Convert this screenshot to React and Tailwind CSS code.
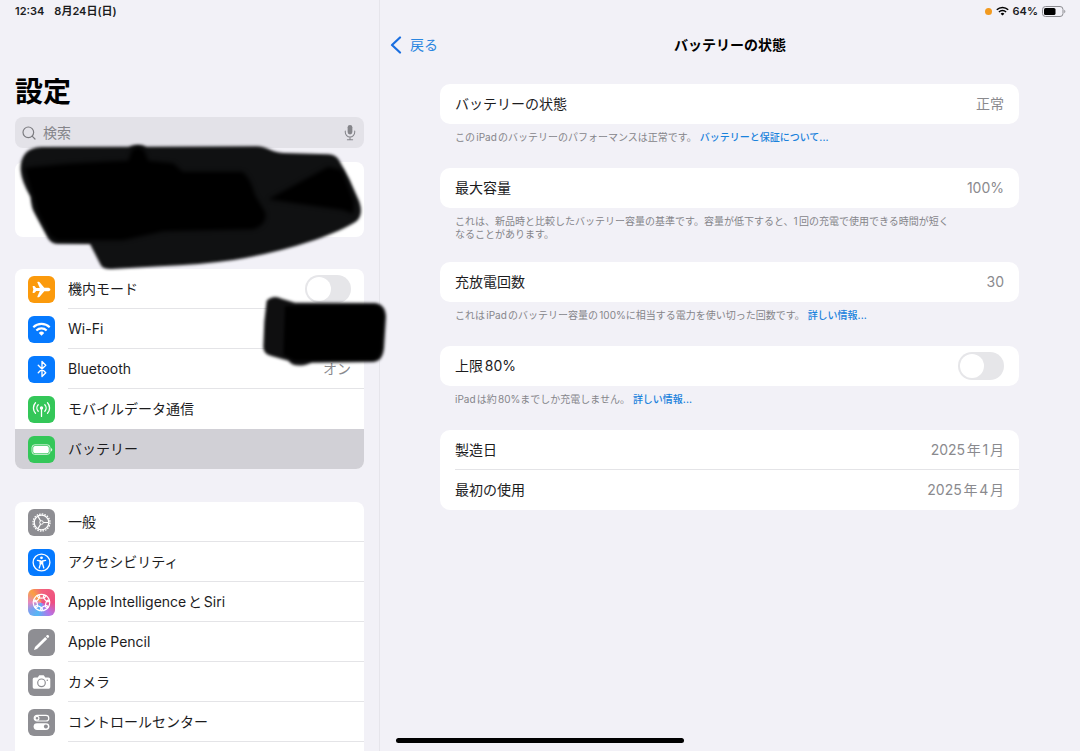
import { useState } from 'react';
import { Bluetooth, Search } from 'lucide-react';
import { IoAirplane } from 'react-icons/io5';

const WifiIcon = ({ className }) => (
  <svg viewBox="0 0 20 15" className={className} fill="none" stroke="currentColor" strokeWidth="2.3">
    <path d="M1.2 5.6a12.6 12.6 0 0 1 17.6 0" />
    <path d="M4.5 9.1a7.8 7.8 0 0 1 11 0" />
    <path d="M10 14.6 7.1 11.7a4.1 4.1 0 0 1 5.8 0Z" fill="currentColor" stroke="none" />
  </svg>
);

const AntennaIcon = () => (
  <svg viewBox="0 0 27 27" className="size-[27px]" fill="none" stroke="#fff" strokeWidth="1.3" strokeLinecap="round">
    <circle cx="13.5" cy="12" r="1.7" fill="#fff" stroke="none" />
    <path d="M13.5 12v8.4" />
    <path d="M10.2 8.8a4.6 4.6 0 0 0 0 6.4M16.8 8.8a4.6 4.6 0 0 1 0 6.4" />
    <path d="M7.5 6.8a7.6 7.6 0 0 0 0 10.4M19.5 6.8a7.6 7.6 0 0 1 0 10.4" />
  </svg>
);

const BatteryIcon = () => (
  <svg viewBox="0 0 27 27" className="size-[27px]" fill="none">
    <rect x="4" y="8.8" width="18" height="9.6" rx="2.8" stroke="#fff" strokeOpacity="0.75" />
    <rect x="5.2" y="10" width="15.6" height="7.2" rx="1.8" fill="#fff" />
    <path d="M23.2 12v3.4c1.4-.5 1.4-2.9 0-3.4Z" fill="#fff" />
  </svg>
);

const GearIcon = () => (
  <svg viewBox="0 0 27 27" className="size-[27px]" fill="none" stroke="#fff">
    <circle cx="13.5" cy="13.5" r="8.5" strokeWidth="1.3" strokeDasharray="1.6 1.07" />
    <circle cx="13.5" cy="13.5" r="7.3" strokeWidth="1.3" />
    <circle cx="13.5" cy="13.5" r="1.8" strokeWidth="1" />
    <path d="M15.3 13.5h5.1M12.6 11.9 10 7.4M12.6 15.1 10 19.6" strokeWidth="1.1" />
  </svg>
);

const AccessibilityIcon = () => (
  <svg viewBox="0 0 27 27" className="size-[27px]" fill="none" stroke="#fff" strokeLinecap="round" strokeLinejoin="round">
    <circle cx="13.5" cy="13.5" r="8.4" strokeWidth="1.3" />
    <circle cx="13.5" cy="8.8" r="1.4" fill="#fff" stroke="none" />
    <path d="M9.4 11.4 12.4 12v3l-1.2 4M17.6 11.4l-3 .6v3l1.2 4" strokeWidth="1.3" />
    <path d="M12.4 12h2.2v3h-2.2z" fill="#fff" strokeWidth="0.8" />
  </svg>
);

const IntelligenceIcon = () => (
  <svg viewBox="0 0 27 27" className="size-[27px]" fill="none" stroke="#fff" strokeWidth="1.2">
    {[0, 51, 103, 154, 206, 257, 309].map((angle) => (
      <ellipse key={angle} cx="13.5" cy="7.2" rx="3.9" ry="1.9" transform={`rotate(${angle} 13.5 13.5)`} />
    ))}
  </svg>
);

const PencilIcon = () => (
  <svg viewBox="0 0 27 27" className="size-[27px]" fill="#fff">
    <path d="m7 18.1 10.2-10.2 2 2L9 20.1l-3 1Z" />
    <path d="m17.9 7.2.9-.9c1.2-1.1 3.1.8 2 2l-.9.9Z" />
  </svg>
);

const CameraIcon = () => (
  <svg viewBox="0 0 27 27" className="size-[27px]">
    <path d="M6.6 8.4h3.1l1.2-1.6c.3-.4.6-.5 1-.5h3.2c.4 0 .7.1 1 .5l1.2 1.6h3.1c1.1 0 1.9.8 1.9 1.9v7.6c0 1.1-.8 1.9-1.9 1.9H6.6c-1.1 0-1.9-.8-1.9-1.9v-7.6c0-1.1.8-1.9 1.9-1.9Z" fill="#fff" />
    <circle cx="13.5" cy="13.8" r="3.8" fill="none" stroke="#8e8e93" strokeWidth="1.2" />
    <circle cx="19.3" cy="11.2" r="0.8" fill="#8e8e93" />
  </svg>
);

const ControlIcon = () => (
  <svg viewBox="0 0 27 27" className="size-[27px]">
    <rect x="6.2" y="6.4" width="14.6" height="5.6" rx="2.8" fill="none" stroke="#fff" strokeWidth="1.2" />
    <circle cx="9" cy="9.2" r="1.9" fill="none" stroke="#fff" strokeWidth="1.2" />
    <rect x="5.6" y="14.2" width="15.8" height="6.8" rx="3.4" fill="#fff" />
    <circle cx="17.9" cy="17.6" r="2" fill="#8e8e93" />
  </svg>
);

const MicIcon = () => (
  <svg viewBox="0 0 12 18" className="h-[17px] w-[12px]" fill="none" stroke="#85858a" strokeWidth="1.1" strokeLinecap="round">
    <rect x="3.5" y="1" width="5" height="10" rx="2.5" fill="#85858a" stroke="none" />
    <path d="M1 7.5v1.3a5 5 0 0 0 10 0V7.5M6 13.8v2.7M3.2 16.7h5.6" />
  </svg>
);

const networkItems = [
  { id: 'airplane', label: '機内モード', color: 'bg-[#fb9a0c]', icon: <IoAirplane className="size-[19px]" />, toggle: true },
  { id: 'wifi', label: 'Wi-Fi', color: 'bg-[#067aff]', icon: <WifiIcon className="h-[14px] w-[19px]" />, covered: true },
  { id: 'bluetooth', label: 'Bluetooth', color: 'bg-[#067aff]', icon: <Bluetooth className="size-[18px]" strokeWidth={1.8} />, value: 'オン' },
  { id: 'cellular', label: 'モバイルデータ通信', color: 'bg-[#34c759]', icon: <AntennaIcon /> },
  { id: 'battery', label: 'バッテリー', color: 'bg-[#34c759]', icon: <BatteryIcon />, active: true },
];

const generalItems = [
  { id: 'general', label: '一般', color: 'bg-[#8e8e93]', icon: <GearIcon /> },
  { id: 'accessibility', label: 'アクセシビリティ', color: 'bg-[#067aff]', icon: <AccessibilityIcon /> },
  {
    id: 'intelligence',
    label: 'Apple IntelligenceとSiri',
    color: 'bg-[conic-gradient(from_0deg,#f2637e,#ee4d80_25%,#b673e8_40%,#55b8f5_55%,#7aa0f0_65%,#e488c0_75%,#f9a043_88%,#f2637e)]',
    icon: <IntelligenceIcon />,
  },
  { id: 'pencil', label: 'Apple Pencil', color: 'bg-[#8e8e93]', icon: <PencilIcon /> },
  { id: 'camera', label: 'カメラ', color: 'bg-[#8e8e93]', icon: <CameraIcon /> },
  { id: 'control', label: 'コントロールセンター', color: 'bg-[#8e8e93]', icon: <ControlIcon /> },
];

const Toggle = ({ id, checked, onChange }) => (
  <input
    id={id}
    type="checkbox"
    role="switch"
    checked={checked}
    onChange={(e) => onChange(e.target.checked)}
    className="h-7 w-[46px] shrink-0 appearance-none rounded-full bg-[#e6e6e9] p-[2px] before:block before:size-6 before:rounded-full before:bg-white checked:bg-[#34c759] checked:before:ml-[18px]"
  />
);

// Black marker strokes over the account card
const AccountScribble = () => (
  <svg viewBox="0 0 1200 420" className="pointer-events-none absolute -top-[22px] -left-[15px] h-[140px] w-[400px] max-w-none" aria-hidden="true">
    <defs>
      <filter id="edge" x="-5%" y="-5%" width="110%" height="110%" colorInterpolationFilters="sRGB">
        <feGaussianBlur stdDeviation="4" />
      </filter>
      <filter id="inner" x="-5%" y="-5%" width="110%" height="110%" colorInterpolationFilters="sRGB">
        <feGaussianBlur stdDeviation="7" />
      </filter>
    </defs>
    <path
      d="M62 90C60 50 80 22 125 21L385 20Q415 8 440 20L770 19C800 19 815 38 850 39L985 43Q1008 44 1018 62L1048 118 1078 185Q1092 228 1066 246C1030 268 975 290 925 306Q830 338 700 360 600 374 480 379L335 387Q308 388 302 374L270 312 170 311Q152 310 144 294L104 220Q94 204 92 170 64 125 62 90Z"
      fill="#101112"
      filter="url(#edge)"
    />
    <g filter="url(#inner)">
      <path
        d="M72 84Q200 68 385 62L396 30Q415 14 432 30L445 62 520 70 548 95 728 95Q752 115 765 165L795 215Q806 252 760 268L490 274 370 301 172 302 150 288 112 216 98 168Z"
        fill="#000"
      />
      <path d="M805 178 985 80 1026 90 1062 185 1060 222 1030 210 900 192Z" fill="#000" />
    </g>
  </svg>
);

const WifiScribble = () => (
  <svg viewBox="0 0 540 390" className="pointer-events-none absolute -top-[49px] -right-14 z-10 h-[130px] w-[180px]" aria-hidden="true">
    <defs>
      <filter id="edgeSmall" x="-5%" y="-5%" width="110%" height="110%" colorInterpolationFilters="sRGB">
        <feGaussianBlur stdDeviation="4" />
      </filter>
    </defs>
    <g filter="url(#edgeSmall)">
      <path
        d="M80 122Q100 104 125 116L165 128 405 129Q436 132 438 170L432 265Q428 304 400 306L215 308Q165 328 145 302L95 288Q68 282 70 258L73 185Z"
        fill="#0f0f10"
      />
      <path d="M135 138 405 135Q430 138 431 170L425 265Q420 298 400 300L165 302 130 285Z" fill="#000" />
    </g>
  </svg>
);

const SidebarRow = ({ item, last, airplane, setAirplane }) => (
  <li className={`relative flex h-10 items-center pl-[13px] ${item.active ? 'rounded-b-lg bg-[#d1d0d6]' : ''}`}>
    <span className={`flex size-[27px] shrink-0 items-center justify-center overflow-hidden rounded-md text-white ${item.color}`}>
      {item.icon}
    </span>
    <div className={`ml-[13px] flex h-full min-w-0 flex-1 items-center justify-between pr-[13px] ${last ? '' : 'border-b border-[#e4e4e7]'}`}>
      {item.toggle ? (
        <>
          <label htmlFor={item.id}>{item.label}</label>
          <Toggle id={item.id} checked={airplane} onChange={setAirplane} />
        </>
      ) : (
        <a href={`#${item.id}`} className="flex flex-1 justify-between">
          <span>{item.label}</span>
          {item.value && <span className="text-[#8a8a8e]">{item.value}</span>}
        </a>
      )}
    </div>
    {item.covered && <WifiScribble />}
  </li>
);

const Card = ({ children }) => (
  <div className="rounded-[10px] bg-white pl-[15px]">{children}</div>
);

const InfoRow = ({ label, value, divider }) => (
  <div className={`flex h-10 items-center justify-between pr-[15px] ${divider ? 'border-b border-[#e4e4e7]' : ''}`}>
    <span>{label}</span>
    <span className="text-[#8a8a8e]">{value}</span>
  </div>
);

const Note = ({ children }) => (
  <p className="min-h-[23px] px-[15px] pt-[7px] text-[10px] leading-[13px] text-[#85858a]">{children}</p>
);

const NoteLink = ({ href, children }) => (
  <a href={href} className="font-medium text-[#1a82dc]">{children}</a>
);

export default function App() {
  const [airplane, setAirplane] = useState(false);
  const [limit, setLimit] = useState(false);
  const [query, setQuery] = useState('');

  return (
    <div lang="ja" className="relative flex h-screen overflow-hidden bg-[#f2f1f7] font-['Inter','Noto_Sans_CJK_JP',sans-serif] text-[14px] leading-5 text-[#1c1c1e] [text-autospace:normal]">
      {/* Sidebar */}
      <aside className="w-[380px] shrink-0 border-r border-[#e6e5eb] px-[15px]">
        <div className="flex h-[22px] items-center gap-2.5 text-[11px] font-semibold [text-autospace:no-autospace]">
          <span>12:34</span>
          <span>8月24日(日)</span>
        </div>
        <h1 className="mt-[52px] text-[28px] leading-9 font-bold text-black">設定</h1>

        <label className="mt-[7px] flex h-[31px] items-center gap-1.5 rounded-lg bg-[#e3e2e8] pr-2 pl-1.5">
          <Search className="size-4 shrink-0 text-[#7c7c81]" strokeWidth={1.8} />
          <input
            type="search"
            aria-label="検索"
            placeholder="検索"
            value={query}
            onChange={(e) => setQuery(e.target.value)}
            className="min-w-0 flex-1 bg-transparent text-[14px] outline-none placeholder:text-[#85858a]"
          />
          <button type="button" aria-label="音声入力">
            <MicIcon />
          </button>
        </label>

        <div className="relative mt-3.5 h-[75px] rounded-lg bg-white">
          <AccountScribble />
        </div>

        <ul className="mt-8 rounded-lg bg-white">
          {networkItems.map((item, i) => (
            <SidebarRow
              key={item.id}
              item={item}
              last={i >= networkItems.length - 2}
              airplane={airplane}
              setAirplane={setAirplane}
            />
          ))}
        </ul>

        <ul className="mt-[33px] rounded-lg bg-white pb-10">
          {generalItems.map((item) => (
            <SidebarRow key={item.id} item={item} />
          ))}
        </ul>
      </aside>

      {/* Detail */}
      <main className="min-w-0 flex-1">
        <div className="flex h-[22px] items-center justify-end gap-1 pr-3.5 text-[11px] font-semibold">
          <span className="size-[7px] rounded-full bg-[#f29a1f]" />
          <WifiIcon className="h-[10px] w-[13px] text-black" />
          <span>64%</span>
          <svg viewBox="0 0 24 11" className="h-[11px] w-6" fill="none">
            <rect x="0.5" y="0.5" width="20.5" height="10" rx="3" stroke="#8b8b90" />
            <rect x="2" y="2" width="11.5" height="7" rx="1.6" fill="#000" />
            <path d="M22.3 3.7v3.6c1.4-.6 1.4-3 0-3.6Z" fill="#8b8b90" />
          </svg>
        </div>

        <header className="grid h-[46px] grid-cols-[1fr_auto_1fr] items-center px-2.5">
          <button type="button" className="flex items-center gap-2 justify-self-start text-[#2a86e0]">
            <svg viewBox="0 0 12 18" className="h-[18px] w-[12px]" fill="none" stroke="#1b6fe0" strokeWidth="2.2" strokeLinecap="round" strokeLinejoin="round">
              <path d="M10 1.5 2 9l8 7.5" />
            </svg>
            戻る
          </button>
          <h2 className="text-[14px] font-bold text-black">バッテリーの状態</h2>
        </header>

        <div className="flex flex-col gap-[21px] pt-4 pr-[61px] pl-15">
          <section>
            <Card>
              <InfoRow label="バッテリーの状態" value="正常" />
            </Card>
            <Note>
              このiPadのバッテリーのパフォーマンスは正常です。 <NoteLink href="#warranty">バッテリーと保証について...</NoteLink>
            </Note>
          </section>

          <section>
            <Card>
              <InfoRow label="最大容量" value="100%" />
            </Card>
            <Note>
              これは、新品時と比較したバッテリー容量の基準です。容量が低下すると、1回の充電で使用できる時間が短く
              <br />
              なることがあります。
            </Note>
          </section>

          <section>
            <Card>
              <InfoRow label="充放電回数" value="30" />
            </Card>
            <Note>
              これはiPadのバッテリー容量の100%に相当する電力を使い切った回数です。 <NoteLink href="#cycles">詳しい情報...</NoteLink>
            </Note>
          </section>

          <section>
            <Card>
              <div className="flex h-10 items-center justify-between pr-[15px]">
                <label htmlFor="limit">上限80%</label>
                <Toggle id="limit" checked={limit} onChange={setLimit} />
              </div>
            </Card>
            <Note>
              iPadは約80%までしか充電しません。 <NoteLink href="#limit-info">詳しい情報...</NoteLink>
            </Note>
          </section>

          <section>
            <Card>
              <InfoRow label="製造日" value="2025年1月" divider />
              <InfoRow label="最初の使用" value="2025年4月" />
            </Card>
          </section>
        </div>
      </main>

      {/* Home indicator */}
      <div className="absolute bottom-2 left-1/2 h-[5px] w-72 -translate-x-1/2 rounded-full bg-black" />
    </div>
  );
}
